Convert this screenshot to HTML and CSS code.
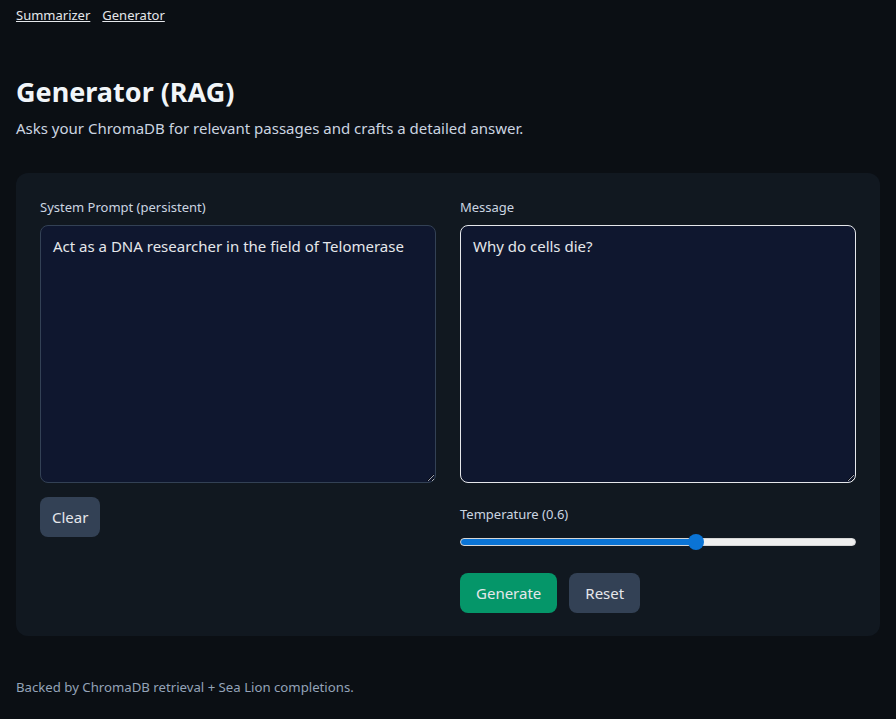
FILE: index.html
```html
<!DOCTYPE html>
<html lang="en">
<head>
<meta charset="utf-8">
<title>Generator (RAG)</title>
<link rel="stylesheet" href="styles.css">
</head>
<body>
<nav class="nav">
  <a href="#">Summarizer</a>
  <a href="#">Generator</a>
</nav>
<main class="page">
  <h1 class="title">Generator (RAG)</h1>
  <p class="subtitle">Asks your ChromaDB for relevant passages and crafts a detailed answer.</p>
  <section class="card">
    <div class="col">
      <label class="label">System Prompt (persistent)</label>
      <textarea class="area">Act as a DNA researcher in the field of Telomerase</textarea>
      <div class="row">
        <button class="btn btn-gray">Clear</button>
      </div>
    </div>
    <div class="col">
      <label class="label">Message</label>
      <textarea class="area area-focus">Why do cells die?</textarea>
      <label class="label label-temp">Temperature (0.6)</label>
      <input class="range" type="range" min="0" max="1" step="0.1" value="0.6">
      <div class="row row-actions">
        <button class="btn btn-green">Generate</button>
        <button class="btn btn-gray btn-wide">Reset</button>
      </div>
    </div>
  </section>
  <p class="footer">Backed by ChromaDB retrieval + Sea Lion completions.</p>
</main>
</body>
</html>
```
FILE: styles.css
```css
* { box-sizing: border-box; }
html, body { margin: 0; padding: 0; }
body {
  background: #0b0f14;
  color: #e5e7eb;
  font-family: "Noto Sans", "Open Sans", sans-serif;
  padding: 0 16px;
}
.nav {
  display: flex;
  gap: 12px;
  padding-top: 6px;
  font-size: 13px;
  line-height: 18px;
}
.nav a { color: #e5e7eb; text-decoration: underline; }
.title {
  margin: 50px 0 0;
  font-size: 27px;
  line-height: 36px;
  font-weight: 700;
  color: #f1f5f9;
}
.subtitle {
  margin: 8px 0 0;
  font-size: 15px;
  line-height: 20px;
  color: #cbd5e1;
}
.card {
  margin-top: 35px;
  background: #111820;
  border-radius: 12px;
  padding: 24px;
  display: grid;
  grid-template-columns: 1fr 1fr;
  gap: 24px;
  height: 463px;
}
.col { display: flex; flex-direction: column; }
.label {
  font-size: 13px;
  line-height: 18px;
  color: #cbd5e1;
  margin-top: 1px;
  margin-bottom: 9px;
}
.label-temp { margin-top: 22px; margin-bottom: 15px; }
.area {
  height: 258px;
  width: 100%;
  background: #0f172f;
  color: #e5e7eb;
  border: 1px solid #334155;
  border-radius: 8px;
  padding: 9px 12px;
  font-family: inherit;
  font-size: 15px;
  line-height: 22px;
  resize: vertical;
}
.area-focus { border-color: #e5e7eb; outline: none; }
.row { display: flex; gap: 12px; margin-top: 14px; }
.row-actions { margin-top: 27px; }
.btn {
  height: 40px;
  padding: 0 12px;
  border: none;
  border-radius: 8px;
  font-family: inherit;
  font-size: 15px;
  color: #e5e7eb;
}
.btn-gray { background: #334155; }
.btn-wide { padding: 0 16px; }
.btn-green { background: #059669; padding: 0 16px; }
.range {
  -webkit-appearance: none;
  appearance: none;
  width: 100%;
  margin: 0;
  height: 8px;
  border-radius: 4px;
  background: linear-gradient(to right, #0b74d5 0, #0b74d5 60%, #efefef 60%, #efefef 100%);
  border: 1px solid #d6d6d6;
}
.range::-webkit-slider-thumb {
  -webkit-appearance: none;
  appearance: none;
  width: 16px;
  height: 16px;
  border-radius: 50%;
  background: #0b74d5;
  border: none;
}
.footer {
  margin: 42px 0 0;
  font-size: 13.2px;
  line-height: 18px;
  color: #94a3b8;
}
```
